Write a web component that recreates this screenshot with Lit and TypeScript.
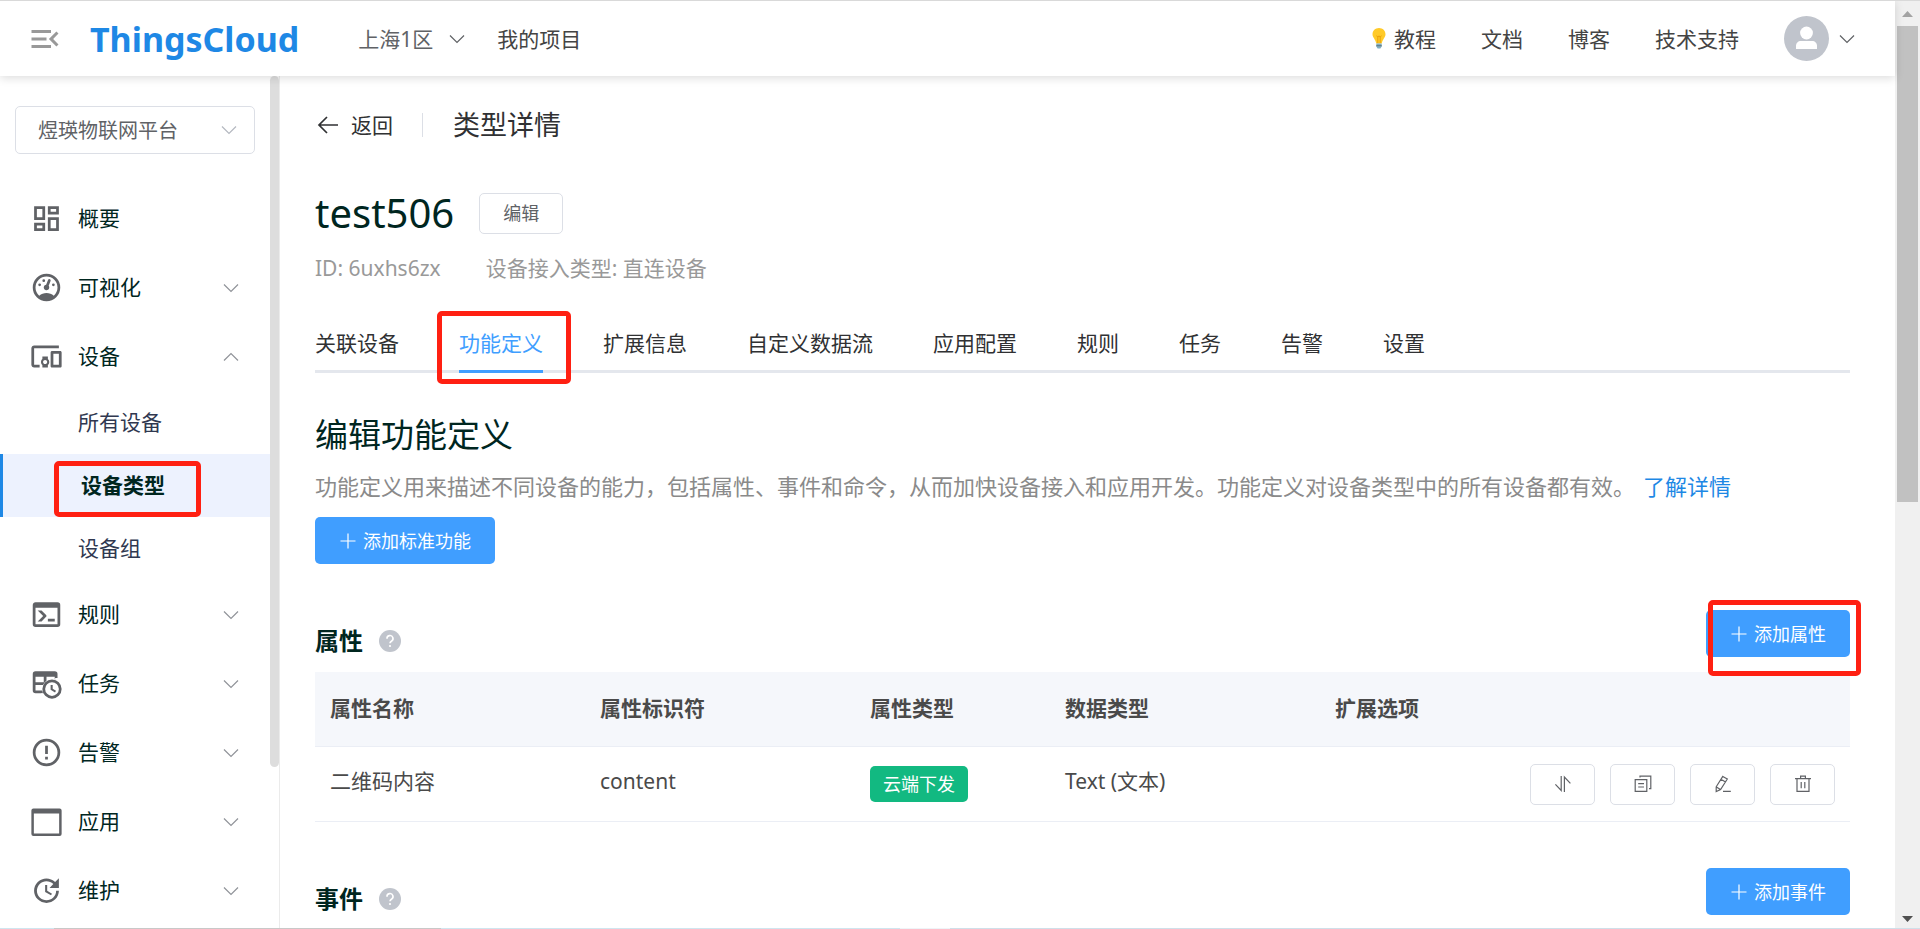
import { LitElement, html, css, svg, nothing } from "lit";
import { customElement, property, state } from "lit/decorators.js";
import { classMap } from "lit/directives/class-map.js";

const glyphs: Record<string, unknown> = {
  overview: svg`<path d="M19 5v2h-4V5h4M9 5v6H5V5h4m10 8v6h-4v-6h4M9 17v2H5v-2h4M21 3h-8v6h8V3zM11 3H3v10h8V3zm10 8h-8v10h8V11zm-10 4H3v6h8v-6z"/>`,
  gauge: svg`<path d="M12,2A10,10 0 0,0 2,12A10,10 0 0,0 12,22A10,10 0 0,0 22,12A10,10 0 0,0 12,2M12,4A8,8 0 0,1 20,12C20,14.4 19,16.5 17.3,18C15.9,16.7 14,16 12,16C10,16 8.2,16.7 6.7,18C5,16.5 4,14.4 4,12A8,8 0 0,1 12,4M14,5.89C13.62,5.9 13.26,6.15 13.1,6.54L11.81,9.77L11.71,10C11,10.13 10.41,10.6 10.14,11.26C9.73,12.29 10.23,13.45 11.26,13.86C12.29,14.27 13.45,13.77 13.86,12.74C14.12,12.08 14,11.32 13.57,10.76L13.67,10.5L14.96,7.29L14.97,7.26C15.17,6.75 14.92,6.17 14.41,5.96C14.28,5.91 14.15,5.89 14,5.89M10,6A1,1 0 0,0 9,7A1,1 0 0,0 10,8A1,1 0 0,0 11,7A1,1 0 0,0 10,6M7,9A1,1 0 0,0 6,10A1,1 0 0,0 7,11A1,1 0 0,0 8,10A1,1 0 0,0 7,9M17,9A1,1 0 0,0 16,10A1,1 0 0,0 17,11A1,1 0 0,0 18,10A1,1 0 0,0 17,9Z"/>`,
  devices: svg`<path d="M3 6h18V4H3c-1.1 0-2 .9-2 2v12c0 1.1.9 2 2 2h4v-2H3V6zm10 6H9v1.78c-.61.55-1 1.33-1 2.22s.39 1.67 1 2.22V20h4v-1.78c.61-.55 1-1.34 1-2.22s-.39-1.67-1-2.22V12zm-2 5.5c-.83 0-1.5-.67-1.5-1.5s.67-1.5 1.5-1.5 1.5.67 1.5 1.5-.67 1.5-1.5 1.5zM22 8h-6c-.5 0-1 .5-1 1v10c0 .5.5 1 1 1h6c.5 0 1-.5 1-1V9c0-.5-.5-1-1-1zm-1 10h-4v-8h4v8z"/>`,
  console: svg`<path d="M20,19V7H4V19H20M20,3A2,2 0 0,1 22,5V19A2,2 0 0,1 20,21H4A2,2 0 0,1 2,19V5C2,3.89 2.9,3 4,3H20M13,17V15H18V17H13M9.58,13L5.57,9H8.4L11.7,12.3C12.09,12.69 12.09,13.33 11.7,13.72L8.42,17H5.59L9.58,13Z"/>`,
  schedule: svg`<path fill-rule="evenodd" d="M4 3H18A2 2 0 0 1 20 5V19H4A2 2 0 0 1 2 17V5A2 2 0 0 1 4 3ZM4 7V11H10V7ZM12 7V11H18V7ZM4 13V17H10V13ZM12 13V17H18V13Z"/><circle cx="16" cy="16" r="7.2" fill="#fff"/><path fill="#fff" d="M18.3 8H24V20H18.3ZM8 19.2H20V24H8Z"/><circle cx="16" cy="16" r="6" fill="#fff" stroke="currentColor" stroke-width="2"/><path d="M15 13H16.5V15.8L18.9 17.2L18.2 18.5L15 16.6Z"/>`,
  alert: svg`<path d="M11,15H13V17H11V15M11,7H13V13H11V7M12,2C6.47,2 2,6.5 2,12A10,10 0 0,0 12,22A10,10 0 0,0 22,12A10,10 0 0,0 12,2M12,20A8,8 0 0,1 4,12A8,8 0 0,1 12,4A8,8 0 0,1 20,12A8,8 0 0,1 12,20Z"/>`,
  window: svg`<path fill-rule="evenodd" d="M2.5 2.5H21.5A1.5 1.5 0 0 1 23 4V21A1.5 1.5 0 0 1 21.5 22.5H2.5A1.5 1.5 0 0 1 1 21V4A1.5 1.5 0 0 1 2.5 2.5ZM2.8 6.2V20.8H21.2V6.2Z"/>`,
  update: svg`<path d="M21,10.12H14.22L16.96,7.3C14.23,4.6 9.81,4.5 7.08,7.2C4.35,9.91 4.35,14.28 7.08,17C9.81,19.7 14.23,19.7 16.96,17C18.32,15.65 19,14.08 19,12.1H21C21,14.08 20.12,16.65 18.36,18.39C14.85,21.87 9.15,21.87 5.64,18.39C2.14,14.92 2.11,9.28 5.62,5.81C9.13,2.34 14.76,2.34 18.27,5.81L21,3V10.12M12.5,8V12.25L16,14.33L15.28,15.54L11,13V8H12.5Z"/>`,
};

const lines: Record<string, unknown> = {
  down: svg`<path d="M2 5.5L9 12.5L16 5.5"/>`,
  up: svg`<path d="M2 12.5L9 5.5L16 12.5"/>`,
  plus: svg`<path d="M1.5 9H16.5M9 1.5V16.5"/>`,
  sort: svg`<path d="M7.2 1V15.5L1.4 9.4M10.4 17V2L16.4 8.4"/>`,
  copy: svg`<path d="M1.2 4.6H12.8V16.4H1.2ZM6 2.6V1.2H16.8V13.6H15M4.2 8.6H10M4.2 12H10"/>`,
  edit: svg`<path d="M8.8 1.4L13.3 4L6.6 14.6L2.2 16.6L2.2 11.8ZM7 4.3L11.5 7M2.4 12L6.4 14.4M9 16.4H16.8"/>`,
  trash: svg`<path d="M1 3.6H17M6.6 3.6V1.2H11.4V3.6M3 3.6V16.4H15V3.6M7.2 7V13.2M10.8 7V13.2"/>`,
};

const lineIcon = (name: string) =>
  html`<svg class="line" viewBox="0 0 18 18" aria-hidden="true">${lines[name]}</svg>`;

const shared = css`
  * { box-sizing: border-box; }
  h1, h2, h3, p, ul { margin: 0; padding: 0; font-size: inherit; font-weight: 400; }
  ul { list-style: none; }
  a { color: inherit; text-decoration: none; }
  button, select { font: inherit; color: inherit; background: none; border: 0; padding: 0; margin: 0; cursor: pointer; }
  svg { display: block; flex: none; }
  .line { width: 18px; height: 18px; fill: none; stroke: currentColor; stroke-width: 1.2; }
  .mark { position: absolute; border: 5px solid #ff2012; border-radius: 5px; pointer-events: none; }
`;

interface MenuEntry { label: string; icon: string; open?: boolean; plain?: boolean; children?: string[]; }

const menu: MenuEntry[] = [
  { label: "概要", icon: "overview", plain: true },
  { label: "可视化", icon: "gauge" },
  { label: "设备", icon: "devices", open: true, children: ["所有设备", "设备类型", "设备组"] },
  { label: "规则", icon: "console" },
  { label: "任务", icon: "schedule" },
  { label: "告警", icon: "alert" },
  { label: "应用", icon: "window" },
  { label: "维护", icon: "update" },
];

@customElement("tc-header")
class TcHeader extends LitElement {
  static styles = [shared, css`
    :host { display: flex; align-items: center; height: 75px; padding: 0 39px 0 27px; background: #fff; color: #444; font-size: 21px; line-height: 30px; box-shadow: 0 2px 9px rgba(0, 0, 0, .14); position: relative; z-index: 2; flex: none; }
    .fold { color: #999; margin-right: 27px; }
    .fold svg { width: 36px; height: 36px; fill: currentColor; }
    .logo { color: #1e88e5; font-size: 34px; line-height: 46px; font-weight: 700; margin-right: 59px; }
    .region { display: flex; align-items: center; gap: 15px; margin-right: 31px; color: #606266; }
    .links { display: flex; align-items: center; gap: 45px; margin-left: auto; }
    .tip { display: flex; align-items: center; gap: 6px; }
    .bulb { width: 18px; height: 21px; }
    .user { display: flex; align-items: center; gap: 9px; color: #606266; }
    .avatar { width: 45px; height: 45px; }
  `];
  render() {
    return html`
      <button class="fold" aria-label="收起菜单"><svg viewBox="0 0 24 24"><path d="M3 18h13v-2H3v2zm0-5h10v-2H3v2zm0-7v2h13V6H3zm18 9.59L17.42 12 21 8.41 19.59 7l-5 5 5 5L21 15.59z"/></svg></button>
      <a class="logo" href="#">ThingsCloud</a>
      <button class="region">上海1区 ${lineIcon("down")}</button>
      <a href="#">我的项目</a>
      <nav class="links">
        <a class="tip" href="#">
          <svg class="bulb" viewBox="0 0 18 21" aria-hidden="true">
            <path fill="#ffca28" d="M9 0C5.2 0 2.5 2.8 2.5 6.3C2.5 9.4 5.6 11.6 6.3 15.6H11.7C12.4 11.6 15.5 9.4 15.5 6.3C15.5 2.8 12.8 0 9 0Z"/>
            <path fill="none" stroke="#e59600" stroke-width=".8" d="M6.6 7.6L7.8 9.2L9 7.8L10.2 9.2L11.4 7.6M7.8 9.2V15M10.2 9.2V15"/>
            <path fill="#82aec0" d="M6.3 15.6H11.7V18.4L10.4 20.6H7.6L6.3 18.4Z"/>
            <path fill="#5d7580" d="M6.3 17.2H11.7V18.2H6.3Z"/>
          </svg>教程</a>
        <a href="#">文档</a>
        <a href="#">博客</a>
        <a href="#">技术支持</a>
        <button class="user" aria-label="账号">
          <svg class="avatar" viewBox="0 0 45 45"><circle cx="22.5" cy="22.5" r="22.5" fill="#c0c4cc"/><circle cx="22.5" cy="17" r="6.4" fill="#fff"/><path fill="#fff" d="M12 33V30C12 27 14 25 17 25H28C31 25 33 27 33 30V33Z"/></svg>
          ${lineIcon("down")}
        </button>
      </nav>`;
  }
}

@customElement("tc-sidebar")
class TcSidebar extends LitElement {
  @state() private current = "设备类型";
  static styles = [shared, css`
    :host { display: block; width: 280px; flex: none; position: relative; overflow: hidden; border-right: 1px solid #ebebeb; background: #fff; font-size: 21px; line-height: 30px; }
    .project { position: relative; display: block; margin: 30px 24px 30px 15px; color: #b4b8c0; }
    .project select { appearance: none; width: 100%; height: 48px; padding: 2px 45px 0 22px; border: 1px solid #dcdfe6; border-radius: 5px; font-size: 20px; color: #606266; background: #fff; display: block; }
    .project .line { position: absolute; right: 17px; top: 15px; }
    .menu { margin-right: 9px; }
    .item { display: flex; align-items: center; gap: 15px; width: 100%; height: 69px; padding: 0 30px; color: #00261f; text-align: left; }
    .item .glyph { width: 33px; height: 33px; fill: currentColor; color: #606266; }
    .item .label { flex: 1; padding-bottom: 2px; }
    .item .line { color: #909399; }
    .sub { position: relative; display: flex; align-items: center; height: 63px; padding: 0 0 2px 78px; color: #303850; }
    .sub.active { background: #edf2fe; border-left: 3px solid #1e88e5; font-weight: 700; color: #00261f; }
    .sub .mark { left: 51px; top: 7px; width: 147px; height: 56px; }
    .thumb { position: absolute; right: 0; top: 0; width: 9px; height: 691px; border-radius: 5px; background: #ddd; }
  `];
  render() {
    return html`
      <label class="project"><select aria-label="项目"><option>煜瑛物联网平台</option></select>${lineIcon("down")}</label>
      <ul class="menu">
        ${menu.map(m => html`<li>
          <button class="item">
            <svg class="glyph" viewBox="0 0 24 24" aria-hidden="true">${glyphs[m.icon]}</svg>
            <span class="label">${m.label}</span>
            ${m.plain ? nothing : lineIcon(m.open ? "up" : "down")}
          </button>
          ${m.children ? html`<ul>${m.children.map(c => html`<li><a href="#" class=${classMap({ sub: true, active: c === this.current })} @click=${() => (this.current = c)}>${c}${c === this.current ? html`<span class="mark"></span>` : nothing}</a></li>`)}</ul>` : nothing}
        </li>`)}
      </ul>
      <div class="thumb"></div>`;
  }
}

@customElement("tc-section-head")
class TcSectionHead extends LitElement {
  @property() label = "";
  @property({ type: Boolean }) marked = false;
  static styles = [shared, css`
    :host { display: flex; align-items: flex-end; justify-content: space-between; margin-top: 46px; }
    .title { display: flex; align-items: center; gap: 16px; font-size: 24px; line-height: 32px; color: #00261f; }
    h3 { font-weight: 700; }
    .help { width: 22px; height: 22px; }
    .add { position: relative; display: flex; align-items: center; gap: 6px; height: 47px; padding: 0 24px; border-radius: 5px; background: #409eff; color: #fff; font-size: 18px; line-height: 24px; }
    .mark { inset: -10px -11px -19px 2px; }
  `];
  render() {
    return html`
      <div class="title"><h3>${this.label}</h3>
        <svg class="help" viewBox="0 0 22 22" role="img" aria-label="帮助"><circle cx="11" cy="11" r="11" fill="#c0c4cc"/><path d="M8 8.8A3 3 0 1 1 12.4 11.2C11.4 11.8 11 12.2 11 13.2" fill="none" stroke="#fff" stroke-width="1.6"/><circle cx="11" cy="16" r="1.1" fill="#fff"/></svg>
      </div>
      <button class="add">${lineIcon("plus")}添加${this.label}${this.marked ? html`<span class="mark"></span>` : nothing}</button>`;
  }
}

@customElement("tc-detail")
class TcDetail extends LitElement {
  @state() private tab = "功能定义";
  private tabs = ["关联设备", "功能定义", "扩展信息", "自定义数据流", "应用配置", "规则", "任务", "告警", "设置"];
  private rows = [{ name: "二维码内容", key: "content", kind: "云端下发", type: "Text (文本)" }];
  static styles = [shared, css`
    :host { display: block; flex: 1; min-width: 0; overflow: hidden; padding: 31px 45px 0 35px; font-size: 21px; line-height: 30px; color: #4a4a4a; }
    .crumb { display: flex; align-items: center; height: 36px; margin-bottom: 42px; color: #303133; }
    .back { display: flex; align-items: center; gap: 12px; padding-right: 29px; }
    .back svg { width: 24px; height: 24px; fill: none; stroke: currentColor; stroke-width: 1.7; }
    .crumb h1 { font-size: 27px; line-height: 36px; padding-left: 30px; }
    .rule { width: 1px; height: 24px; background: #dcdfe6; }
    .name { display: flex; align-items: center; gap: 25px; height: 56px; margin-bottom: 12px; }
    .name h2 { font-size: 40px; line-height: 56px; color: #00261f; }
    .plain { display: flex; align-items: center; justify-content: center; height: 41px; border: 1px solid #dcdfe6; border-radius: 5px; color: #606266; font-size: 18px; line-height: 24px; background: #fff; }
    .name .plain { padding: 0 23px; }
    .meta { display: flex; gap: 45px; color: #999; margin-bottom: 30px; }
    .tabs { display: flex; gap: 60px; box-shadow: inset 0 -3px #e4e7ed; margin-bottom: 38px; color: #303133; }
    .tab { position: relative; height: 60px; }
    .tab.on { color: #409eff; box-shadow: inset 0 -3px #409eff; }
    .tab .mark { inset: -2px -28px -11px -22px; }
    .heading { font-size: 33px; line-height: 48px; color: #00261f; margin-bottom: 12px; }
    .desc { font-size: 22px; color: #8a8a8a; margin-bottom: 16px; }
    .desc a { color: #1e88e5; margin-left: 8px; }
    .add { display: flex; align-items: center; gap: 6px; height: 47px; padding: 0 24px; border-radius: 5px; background: #409eff; color: #fff; font-size: 18px; line-height: 24px; }
    table { width: 100%; margin-top: 15px; border-collapse: separate; border-spacing: 0; table-layout: fixed; }
    th, td { height: 75px; padding: 0 15px; text-align: left; vertical-align: middle; border-bottom: 1px solid #ebeef5; }
    th { background: #f5f7fb; font-weight: 700; padding-bottom: 2px; }
    .wide { width: 270px; }
    .slim { width: 195px; }
    td .text { display: block; padding-bottom: 6px; }
    .tag { display: inline-block; vertical-align: middle; height: 36px; padding: 0 13px; border-radius: 5px; background: #12b981; color: #fff; font-size: 18px; line-height: 36px; }
    .ops { display: flex; gap: 15px; justify-content: flex-end; }
    .ops .plain { width: 65px; }
  `];
  render() {
    return html`
      <div class="crumb">
        <button class="back"><svg viewBox="0 0 24 24" aria-hidden="true"><path d="M23 12H4M12 4L4 12L12 20"/></svg>返回</button>
        <span class="rule"></span>
        <h1>类型详情</h1>
      </div>
      <div class="name"><h2>test506</h2><button class="plain">编辑</button></div>
      <div class="meta"><span>ID: 6uxhs6zx</span><span>设备接入类型: 直连设备</span></div>
      <div class="tabs" role="tablist">
        ${this.tabs.map(t => html`<button role="tab" class=${classMap({ tab: true, on: t === this.tab })} @click=${() => (this.tab = t)}>${t}${t === this.tab ? html`<span class="mark"></span>` : nothing}</button>`)}
      </div>
      <h2 class="heading">编辑功能定义</h2>
      <p class="desc">功能定义用来描述不同设备的能力，包括属性、事件和命令，从而加快设备接入和应用开发。功能定义对设备类型中的所有设备都有效。<a href="#">了解详情</a></p>
      <button class="add">${lineIcon("plus")}添加标准功能</button>
      <tc-section-head label="属性" marked></tc-section-head>
      <table>
        <thead><tr><th class="wide">属性名称</th><th class="wide">属性标识符</th><th class="slim">属性类型</th><th class="wide">数据类型</th><th>扩展选项</th></tr></thead>
        <tbody>
          ${this.rows.map(r => html`<tr>
            <td><span class="text">${r.name}</span></td>
            <td><span class="text">${r.key}</span></td>
            <td><span class="tag">${r.kind}</span></td>
            <td><span class="text">${r.type}</span></td>
            <td><div class="ops">
              <button class="plain" aria-label="排序">${lineIcon("sort")}</button>
              <button class="plain" aria-label="复制">${lineIcon("copy")}</button>
              <button class="plain" aria-label="编辑">${lineIcon("edit")}</button>
              <button class="plain" aria-label="删除">${lineIcon("trash")}</button>
            </div></td>
          </tr>`)}
        </tbody>
      </table>
      <tc-section-head label="事件"></tc-section-head>`;
  }
}

@customElement("app-root")
class AppRoot extends LitElement {
  static styles = [shared, css`
    :host { display: grid; grid-template-columns: minmax(0, 1fr) 25px; grid-template-rows: minmax(0, 1fr) 1px; height: 100vh; overflow: hidden; border-top: 1px solid #d9d9d9; box-sizing: border-box; background: #fff; font-family: "Noto Sans", "Noto Sans CJK SC", sans-serif; }
    .page { display: flex; flex-direction: column; min-height: 0; }
    .body { display: flex; flex: 1; min-height: 0; }
    .scroll { display: flex; flex-direction: column; align-items: center; background: #f0f0f0; padding-bottom: 6px; }
    .scroll svg { width: 11px; height: 6px; }
    .scroll .up { fill: #a3a3a3; margin: 10px 0 9px; }
    .scroll .down { fill: #505050; margin-top: auto; }
    .thumb { width: 21px; height: 476px; background: #c1c1c1; }
    .edge { grid-column: 1 / -1; background: linear-gradient(90deg, #cfe5ef 0 54px, #c8c8c8 54px 441px, #cfe5ef 441px 900px, #eef4f8 900px 950px, #cfdfe9 950px); }
  `];
  render() {
    return html`
      <div class="page">
        <tc-header></tc-header>
        <div class="body"><tc-sidebar></tc-sidebar><tc-detail></tc-detail></div>
      </div>
      <div class="scroll" aria-hidden="true">
        <svg class="up" viewBox="0 0 11 6"><path d="M0 6L5.5 0L11 6Z"/></svg>
        <div class="thumb"></div>
        <svg class="down" viewBox="0 0 11 6"><path d="M0 0H11L5.5 6Z"/></svg>
      </div>
      <div class="edge"></div>`;
  }
}
